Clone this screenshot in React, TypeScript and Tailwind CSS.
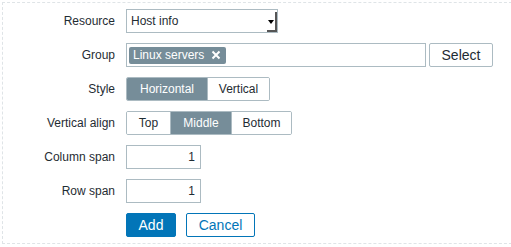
import React from 'react'

const labelCls = 'w-[112px] text-right text-[12px] text-[#1f2c33]'

function Row({ label, children }: { label: string; children: React.ReactNode }) {
  return (
    <div className="flex h-[24px] items-center gap-[11px]">
      <div className={labelCls}>{label}</div>
      <div className="flex items-center">{children}</div>
    </div>
  )
}

function Segmented({ items, active }: { items: { label: string; w: string }[]; active: number }) {
  return (
    <div className="flex h-[24px] rounded-[2px] border border-[#acbbc2] overflow-hidden">
      {items.map((it, i) => (
        <div
          key={it.label}
          className={
            'flex items-center justify-center text-[12px] ' + it.w + ' ' +
            (i === active ? 'bg-[#768d99] text-white' : 'bg-white text-[#1f2c33]') +
            (i > 0 ? ' border-l border-[#acbbc2]' : '')
          }
        >
          {it.label}
        </div>
      ))}
    </div>
  )
}

export default function App() {
  return (
    <div className="w-[511px] h-[247px] bg-white pl-[2px] pt-[2px] overflow-hidden" style={{ fontFamily: '"Liberation Sans", Arial, sans-serif' }}>
      <div className="w-[520px] border-l border-t border-b border-dashed border-[#dfe4e7] pt-[6px] pb-[6px] flex flex-col gap-[10px]">
        <Row label="Resource">
          <div className="relative flex h-[24px] w-[152px] items-center border border-[#acbbc2] bg-white pl-[4px] text-[12px] text-[#1f2c33]">
            Host info
            <div className="absolute right-0 top-[2px] h-[20px] w-[10px] border-r-2 border-b-2 border-[#555]">
              <div className="absolute left-[1px] top-[8px] h-0 w-0 border-l-[3px] border-r-[3px] border-t-[4px] border-l-transparent border-r-transparent border-t-black" />
            </div>
          </div>
        </Row>
        <Row label="Group">
          <div className="flex h-[24px] w-[300px] items-center border border-[#acbbc2] bg-white pl-[2px]">
            <div className="flex h-[17px] items-center gap-[7px] rounded-[2px] bg-[#768d99] pl-[4px] pr-[5px] text-[12px] text-white">
              Linux servers
              <svg width="10" height="10" viewBox="0 0 10 10">
                <path d="M1.5 1.5L8.5 8.5M8.5 1.5L1.5 8.5" stroke="white" strokeWidth="2" />
              </svg>
            </div>
          </div>
          <button className="ml-[3px] h-[24px] w-[64px] rounded-[2px] border border-[#acbbc2] bg-white text-[14px] text-[#1f2c33]">
            Select
          </button>
        </Row>
        <Row label="Style">
          <Segmented
            items={[
              { label: 'Horizontal', w: 'w-[80px]' },
              { label: 'Vertical', w: 'w-[62px]' },
            ]}
            active={0}
          />
        </Row>
        <Row label="Vertical align">
          <Segmented
            items={[
              { label: 'Top', w: 'w-[43px]' },
              { label: 'Middle', w: 'w-[61px]' },
              { label: 'Bottom', w: 'w-[60px]' },
            ]}
            active={1}
          />
        </Row>
        <Row label="Column span">
          <div className="flex h-[24px] w-[75px] items-center justify-end border border-[#acbbc2] bg-white pr-[5px] text-[12px] text-[#1f2c33]">1</div>
        </Row>
        <Row label="Row span">
          <div className="flex h-[24px] w-[75px] items-center justify-end border border-[#acbbc2] bg-white pr-[5px] text-[12px] text-[#1f2c33]">1</div>
        </Row>
        <Row label="">
          <button className="h-[24px] w-[50px] rounded-[2px] border border-[#0275b8] bg-[#0275b8] text-[14px] text-white">Add</button>
          <button className="ml-[10px] h-[24px] w-[69px] rounded-[2px] border border-[#0275b8] bg-white text-[14px] text-[#0275b8]">Cancel</button>
        </Row>
      </div>
    </div>
  )
}
